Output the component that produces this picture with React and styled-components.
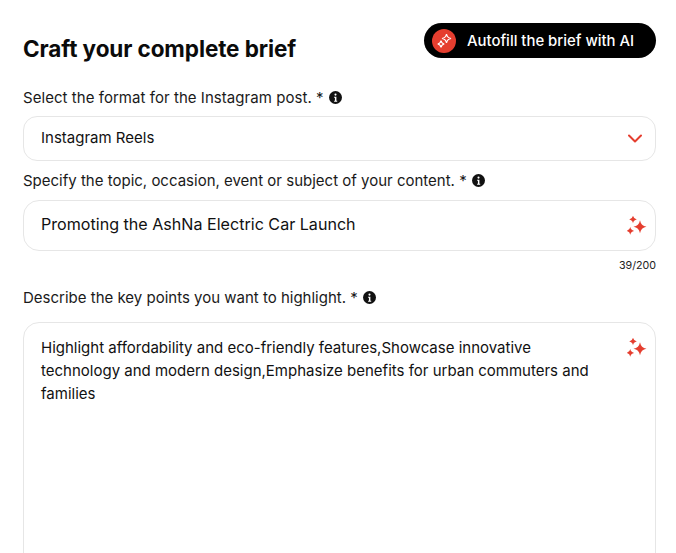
import React from 'react';
import styled, { createGlobalStyle } from 'styled-components';

const Global = createGlobalStyle`
  html, body {
    margin: 0;
    height: 553px;
    overflow: hidden;
    background: #fff;
    font-family: "Inter", "Noto Sans", sans-serif;
    color: #111;
  }
`;

const Page = styled.div`
  box-sizing: border-box;
  height: 553px;
  overflow: hidden;
  padding: 23px 20px 0 23px;
  display: flex;
  flex-direction: column;
`;

const Header = styled.div`
  display: flex;
  justify-content: space-between;
  align-items: flex-start;
  flex: none;
  height: 64px;
`;

const Title = styled.h1`
  margin: 13px 0 0;
  font-size: 22.5px;
  line-height: 26px;
  font-weight: 700;
  letter-spacing: -0.1px;
  color: #0b0b0b;
`;

const AutofillButton = styled.button`
  display: flex;
  align-items: center;
  width: 232px;
  height: 35px;
  padding: 0 0 0 8px;
  gap: 11px;
  border: none;
  border-radius: 18px;
  background: #000;
  color: #fff;
  font: 500 14.9px "Inter", sans-serif;
`;

const Badge = styled.span`
  display: flex;
  align-items: center;
  justify-content: center;
  width: 24px;
  height: 24px;
  border-radius: 50%;
  background: #e53e2f;
`;

const Label = styled.div`
  display: flex;
  align-items: center;
  flex: none;
  gap: 5px;
  height: 20px;
  margin-top: ${p => p.$top || 0}px;
  margin-bottom: ${p => p.$gap}px;
  font-size: 15px;
  letter-spacing: ${p => p.$track || 0}px;
  color: #1a1a1a;
`;

const Field = styled.div`
  display: flex;
  flex: none;
  justify-content: space-between;
  box-sizing: border-box;
  height: ${p => p.$height}px;
  align-items: ${p => p.$top ? 'flex-start' : 'center'};
  padding: ${p => p.$top ? '13px 8px 0 17px' : '0 8px 0 17px'};
  border: 1px solid #e6e6e6;
  border-radius: ${p => p.$radius}px;
  font-size: ${p => p.$size}px;
  line-height: 23px;
  color: #111;
`;

const FieldText = styled.div`
  max-width: 560px;
  margin-bottom: ${p => p.$lift || 0}px;
`;

const ChevronSlot = styled.span`
  display: flex;
  margin-right: 5px;
`;

const SparkleSlot = styled.span`
  display: flex;
  margin-top: ${p => p.$top || 0}px;
`;

const Counter = styled.div`
  flex: none;
  text-align: right;
  font-size: 10.7px;
  line-height: 14px;
  margin: 8px 0 14px;
  color: #222;
`;

const InfoIcon = () => (
  <svg width="13" height="13" viewBox="0 0 16 16">
    <circle cx="8" cy="8" r="8" fill="#111" />
    <circle cx="8" cy="4.400" r="1.300" fill="#fff" />
    <path d="M6.300 7h2.800v5h1v1.300H6.300V12h1V8.300h-1z" fill="#fff" />
  </svg>
);

const star = (x, y, r, k = 0.15) => {
  const w = r * k;
  return `M${x} ${y - r}Q${x + w} ${y - w} ${x + r} ${y}Q${x + w} ${y + w} ${x} ${y + r}Q${x - w} ${y + w} ${x - r} ${y}Q${x - w} ${y - w} ${x} ${y - r}z`;
};

const Sparkles = () => (
  <svg width="20" height="20" viewBox="0 0 20 20" fill="#e53e2f">
    <path d={star(13, 10.700, 6.500)} />
    <path d={star(6, 3.400, 3.800)} />
    <path d={star(3.300, 14.900, 3.800)} />
  </svg>
);

const Chevron = () => (
  <svg width="14" height="9" viewBox="0 0 14 9" fill="none" stroke="#e53e2f" strokeWidth="2" strokeLinecap="round" strokeLinejoin="round">
    <path d="M1 1.500l6 6 6-6" />
  </svg>
);

const BadgeStars = () => (
  <svg width="18" height="18" viewBox="0 0 18 18" fill="none" stroke="#fff" strokeWidth="1.200">
    <path d={star(11.500, 6.500, 4.500)} />
    <path d={star(6, 12, 3.300)} />
  </svg>
);

export default function App() {
  return (
    <Page>
      <Global />
      <Header>
        <Title>Craft your complete brief</Title>
        <AutofillButton>
          <Badge><BadgeStars /></Badge>
          Autofill the brief with AI
        </AutofillButton>
      </Header>

      <Label $gap={9} $track={0.05}>Select the format for the Instagram post. * <InfoIcon /></Label>
      <Field $height={45} $radius={14} $size={15}>
        <FieldText $lift={2}>Instagram Reels</FieldText>
        <ChevronSlot><Chevron /></ChevronSlot>
      </Field>

      <Label $top={9} $gap={10}>Specify the topic, occasion, event or subject of your content. * <InfoIcon /></Label>
      <Field $height={51} $radius={16} $size={16.100}>
        <FieldText $lift={2}>Promoting the AshNa Electric Car Launch</FieldText>
        <Sparkles />
      </Field>
      <Counter>39/200</Counter>

      <Label $gap={15}>Describe the key points you want to highlight. * <InfoIcon /></Label>
      <Field $height={300} $radius={16} $size={15} $top>
        <FieldText>Highlight affordability and eco-friendly features,Showcase innovative technology and modern design,Emphasize benefits for urban commuters and families</FieldText>
        <SparkleSlot $top={2}><Sparkles /></SparkleSlot>
      </Field>
    </Page>
  );
}
